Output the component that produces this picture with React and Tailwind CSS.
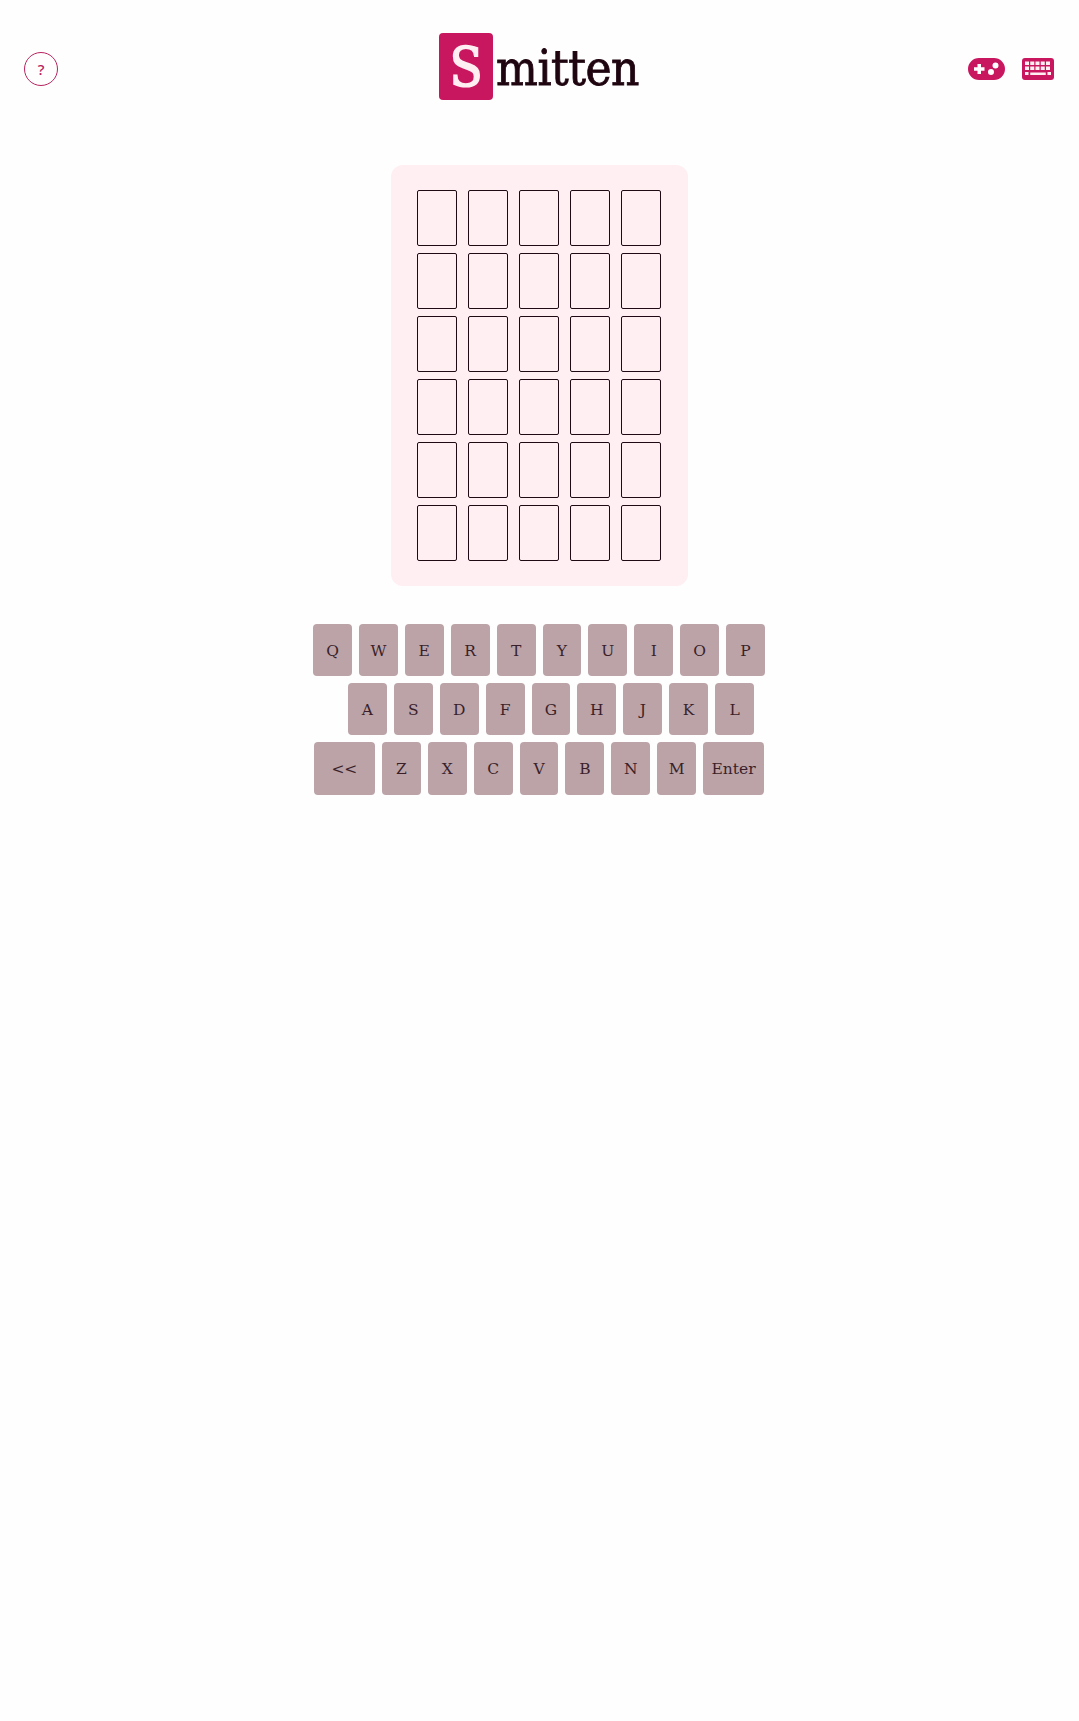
const rows = [
  ["Q", "W", "E", "R", "T", "Y", "U", "I", "O", "P"],
  ["A", "S", "D", "F", "G", "H", "J", "K", "L"],
  ["<<", "Z", "X", "C", "V", "B", "N", "M", "Enter"],
];

const serif = "font-['DejaVu_Serif',serif]";

const GamepadIcon = () => (
  <svg width="37" height="22" viewBox="0 0 37 22" fill="currentColor">
    <path
      fillRule="evenodd"
      d="M11 0h15a11 11 0 0 1 0 22H11a11 11 0 0 1 0-22zM9.5 6v3.25H6v3.5h3.5V16h3.5v-3.25h3.5v-3.5H13V6zM27.5 4.5a3 3 0 1 0 0 6 3 3 0 0 0 0-6zM23 11a3 3 0 1 0 0 6 3 3 0 0 0 0-6z"
    />
  </svg>
);

const KeyboardIcon = () => (
  <svg width="32" height="22" viewBox="0 0 32 22" fill="currentColor">
    <rect width="32" height="22" rx="3" />
    <g fill="#ffeef2">
      {[3, 8.25, 13.5, 18.75, 24].map((x) => (
        <rect key={x} x={x} y="3.5" width="4" height="3.5" />
      ))}
      {[3, 8.25, 13.5, 18.75, 24].map((x) => (
        <rect key={x} x={x} y="8.5" width="4" height="3.5" />
      ))}
      <rect x="3" y="14" width="3.5" height="3" />
      <rect x="8.25" y="14.5" width="15.5" height="2.5" />
      <rect x="25.5" y="14" width="3.5" height="3" />
    </g>
  </svg>
);

const Key = ({ label, tall }) => {
  const wide = label.length > 1;
  return (
    <button
      className={`${wide ? "w-[61px]" : "w-[38.9px]"} ${tall ? "h-[53px]" : "h-[52px]"} pt-[3px] rounded-[4px] bg-[#bba3a8] text-[#3a1f2a] text-[15.5px] ${serif}`}
    >
      {label}
    </button>
  );
};

const App = () => {
  return (
    <div className="min-h-[1721px] bg-[#fefefe]">
      <header className="flex items-center pt-[33px] pl-[24px] pr-[25px]">
        <div className="flex-1 pt-[5px]">
          <button className="flex items-center justify-center w-[34px] h-[34px] rounded-full border border-[#b8245f] text-[#b8245f] text-[15px] font-medium font-['Noto_Sans',sans-serif]">
            ?
          </button>
        </div>
        <div className="flex items-center">
          <div className={`flex items-center justify-center w-[54px] h-[67px] pt-[2px] rounded-[4px] bg-[#c9175f] text-[#ffeef2] text-[54px] font-stretch-condensed [-webkit-text-stroke:1.5px_#ffeef2] ${serif}`}>
            S
          </div>
          <div className={`ml-[3px] pt-[4px] text-[#1f0510] text-[49px] leading-none font-stretch-condensed tracking-[-0.5px] [-webkit-text-stroke:0.8px_#1f0510] ${serif}`}>
            mitten
          </div>
        </div>
        <div className="flex-1 pt-[5px] flex justify-end items-center gap-[17px] text-[#c9175f]">
          <GamepadIcon />
          <KeyboardIcon />
        </div>
      </header>

      <main className="flex flex-col items-center">
        <div className="mt-[65px] w-[297px] rounded-[12px] bg-[#ffeef2] pt-[25px] pb-[25px] pl-[26px] pr-[27px] flex flex-col gap-[7px]">
          {[0, 1, 2, 3, 4, 5].map((r) => (
            <div key={r} className="flex gap-[11px]">
              {[0, 1, 2, 3, 4].map((c) => (
                <div key={c} className="w-[40px] h-[56px] rounded-[2px] border border-[#1f0a14]" />
              ))}
            </div>
          ))}
        </div>

        <div className="mt-[38px] mr-[1px] flex flex-col gap-[7px]">
          {rows.map((row, i) => (
            <div key={i} className="flex justify-center gap-[7px]">
              {i === 1 && <div className="w-[17px]" />}
              {row.map((k) => (
                <Key key={k} label={k} tall={i === 2} />
              ))}
            </div>
          ))}
        </div>
      </main>
    </div>
  );
};

export default App;
